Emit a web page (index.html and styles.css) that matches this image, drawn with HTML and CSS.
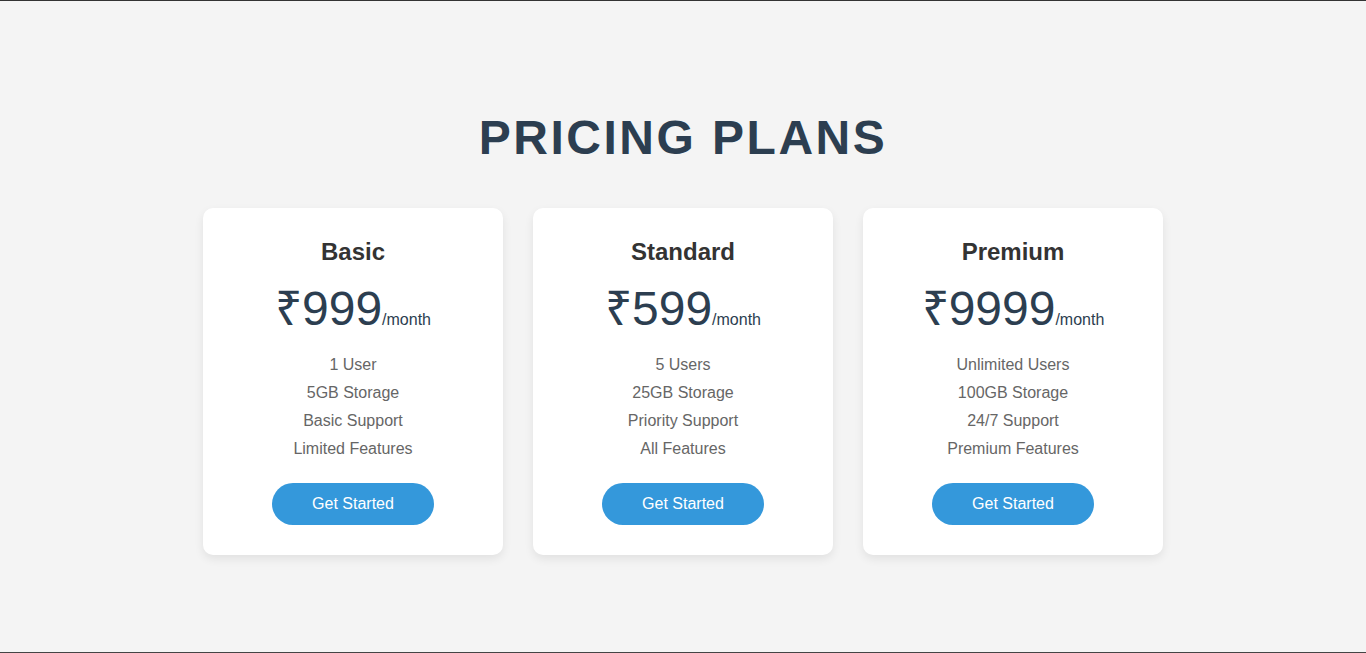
FILE: index.html
```html
<!DOCTYPE html>
<html lang="en">
<head>
<meta charset="utf-8">
<title>Pricing Plans</title>
<link rel="stylesheet" href="styles.css">
</head>
<body>
<main class="page">
  <h1 class="title">PRICING PLANS</h1>
  <section class="plans">
    <div class="card">
      <h3 class="plan-name">Basic</h3>
      <p class="price">₹999<span class="period">/month</span></p>
      <ul class="features">
        <li>1 User</li>
        <li>5GB Storage</li>
        <li>Basic Support</li>
        <li>Limited Features</li>
      </ul>
      <a class="btn" href="#">Get Started</a>
    </div>
    <div class="card">
      <h3 class="plan-name">Standard</h3>
      <p class="price">₹599<span class="period">/month</span></p>
      <ul class="features">
        <li>5 Users</li>
        <li>25GB Storage</li>
        <li>Priority Support</li>
        <li>All Features</li>
      </ul>
      <a class="btn" href="#">Get Started</a>
    </div>
    <div class="card">
      <h3 class="plan-name">Premium</h3>
      <p class="price">₹9999<span class="period">/month</span></p>
      <ul class="features">
        <li>Unlimited Users</li>
        <li>100GB Storage</li>
        <li>24/7 Support</li>
        <li>Premium Features</li>
      </ul>
      <a class="btn" href="#">Get Started</a>
    </div>
  </section>
</main>
</body>
</html>
```
FILE: styles.css
```css
* { box-sizing: border-box; }
html, body {
  margin: 0;
  padding: 0;
}
body {
  background: #f4f4f4;
  font-family: "Liberation Sans", Arial, sans-serif;
}
.page {
  height: 653px;
  border-top: 1px solid #333;
  border-bottom: 1px solid #444;
  padding-top: 109px;
  display: flex;
  flex-direction: column;
  align-items: center;
  overflow: hidden;
}
.title {
  margin: 0 0 43px;
  font-size: 48px;
  font-weight: bold;
  letter-spacing: 2.5px;
  color: #2c3e50;
  text-align: center;
}
.plans {
  display: flex;
  gap: 30px;
  justify-content: center;
}
.card {
  width: 300px;
  background: #fff;
  border-radius: 10px;
  box-shadow: 0 4px 10px rgba(0, 0, 0, 0.08);
  padding: 30px 20px;
  text-align: center;
  display: flex;
  flex-direction: column;
  align-items: center;
}
.plan-name {
  margin: 0 0 8px;
  font-size: 24px;
  font-weight: bold;
  color: #333;
}
.price {
  margin: 0 0 12px;
  font-size: 48px;
  color: #2c3e50;
}
.period {
  font-size: 16px;
}
.features {
  list-style: none;
  margin: 0 0 20px;
  padding: 0;
}
.features li {
  padding: 5px 0;
  font-size: 16px;
  color: #666;
}
.btn {
  display: inline-block;
  padding: 12px 40px;
  border-radius: 25px;
  background: #3498db;
  color: #fff;
  font-size: 16px;
  text-decoration: none;
}
```
